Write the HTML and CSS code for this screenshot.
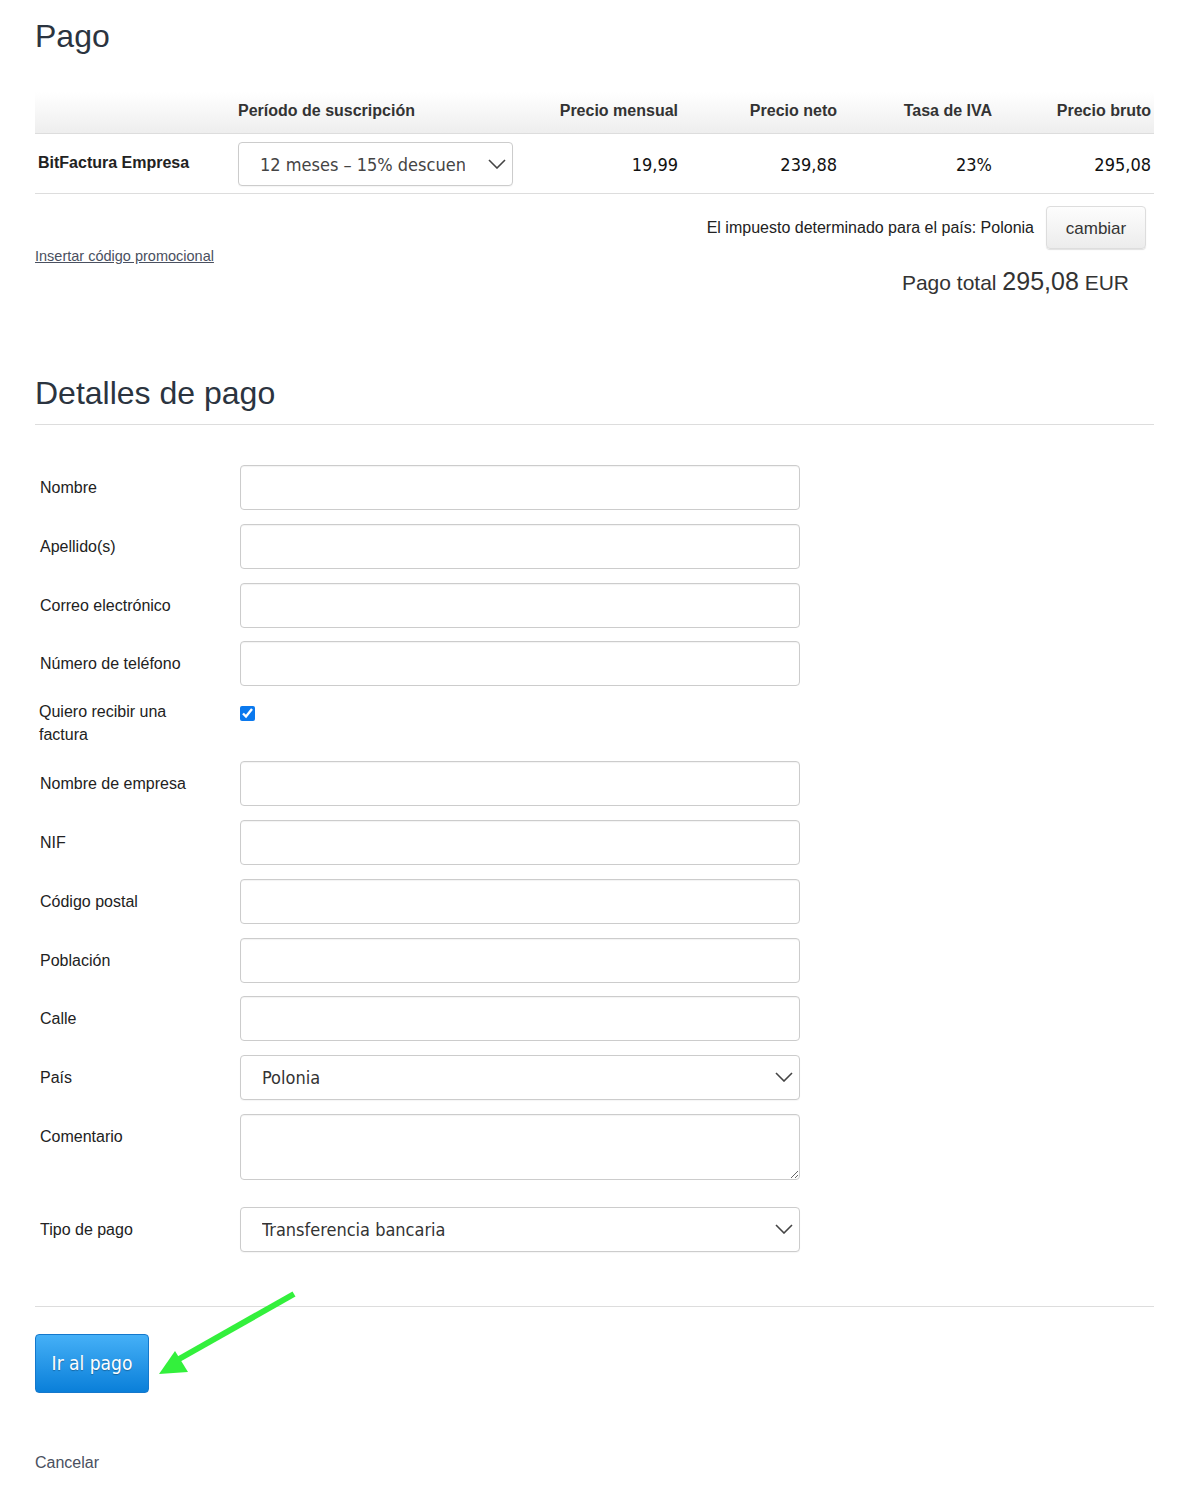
FILE: index.html
```html
<!DOCTYPE html>
<html lang="es">
<head>
    <meta charset="UTF-8">
    <meta name="viewport" content="width=device-width, initial-scale=1.0">
    <title>Pago - BitFactura</title>
    <link rel="stylesheet" href="styles.css">
</head>
<body>
    <div class="page">
        <h1>Pago</h1>

        <table class="plan-table">
            <thead>
                <tr>
                    <th class="col-name"></th>
                    <th class="col-period">Período de suscripción</th>
                    <th class="num col-month">Precio mensual</th>
                    <th class="num col-net">Precio neto</th>
                    <th class="num col-vat">Tasa de IVA</th>
                    <th class="num col-gross">Precio bruto</th>
                </tr>
            </thead>
            <tbody>
                <tr>
                    <td class="plan-name">BitFactura Empresa</td>
                    <td>
                        <div class="select-wrap period-select">
                            <select>
                                <option>12 meses – 15% descuento</option>
                                <option>1 mes</option>
                            </select>
                            <svg class="chevron" width="18" height="10" viewBox="0 0 18 10"><path d="M1 1 L9 9 L17 1" fill="none" stroke="#444" stroke-width="1.6"/></svg>
                        </div>
                    </td>
                    <td class="num amount">19,99</td>
                    <td class="num amount">239,88</td>
                    <td class="num amount">23%</td>
                    <td class="num amount">295,08</td>
                </tr>
            </tbody>
        </table>

        <div class="summary">
            <a href="#" class="promo-link">Insertar código promocional</a>
            <div class="summary-right">
                <div class="tax-line">
                    <span>El impuesto determinado para el país: Polonia</span>
                    <button class="btn-light">cambiar</button>
                </div>
                <div class="total">Pago total <span class="total-amount">295,08</span> EUR</div>
            </div>
        </div>

        <h2>Detalles de pago</h2>

        <form class="payment-form" onsubmit="return false">
            <div class="field">
                <label>Nombre</label>
                <input type="text">
            </div>
            <div class="field">
                <label>Apellido(s)</label>
                <input type="text">
            </div>
            <div class="field">
                <label>Correo electrónico</label>
                <input type="text">
            </div>
            <div class="field">
                <label>Número de teléfono</label>
                <input type="text">
            </div>
            <div class="field field-check">
                <label>Quiero recibir una factura</label>
                <input type="checkbox" checked>
            </div>
            <div class="field">
                <label>Nombre de empresa</label>
                <input type="text">
            </div>
            <div class="field">
                <label>NIF</label>
                <input type="text">
            </div>
            <div class="field">
                <label>Código postal</label>
                <input type="text">
            </div>
            <div class="field">
                <label>Población</label>
                <input type="text">
            </div>
            <div class="field">
                <label>Calle</label>
                <input type="text">
            </div>
            <div class="field">
                <label>País</label>
                <div class="select-wrap form-select">
                    <select>
                        <option>Polonia</option>
                        <option>España</option>
                    </select>
                    <svg class="chevron" width="18" height="10" viewBox="0 0 18 10"><path d="M1 1 L9 9 L17 1" fill="none" stroke="#444" stroke-width="1.6"/></svg>
                </div>
            </div>
            <div class="field field-area">
                <label>Comentario</label>
                <textarea></textarea>
            </div>
            <div class="field">
                <label>Tipo de pago</label>
                <div class="select-wrap form-select">
                    <select>
                        <option>Transferencia bancaria</option>
                        <option>Tarjeta</option>
                    </select>
                    <svg class="chevron" width="18" height="10" viewBox="0 0 18 10"><path d="M1 1 L9 9 L17 1" fill="none" stroke="#444" stroke-width="1.6"/></svg>
                </div>
            </div>

            <div class="actions">
                <button class="btn-primary" type="submit">Ir al pago</button>
                <svg class="arrow" width="160" height="110" viewBox="0 0 160 110">
                    <line x1="154" y1="13" x2="32" y2="82" stroke="#33f03c" stroke-width="6"/>
                    <polygon points="19,93 35,70 48,91" fill="#33f03c"/>
                </svg>
            </div>
            <a href="#" class="cancel-link">Cancelar</a>
        </form>
    </div>
</body>
</html>
```

FILE: styles.css
```css
body {
    margin: 0;
    font-family: "Liberation Sans", Arial, sans-serif;
    color: #222;
    background: #fff;
}
.page {
    width: 1119px;
    padding: 0 35px;
    position: relative;
}
h1, h2 {
    font-size: 32px;
    font-weight: normal;
    line-height: 35px;
    color: #2b3440;
    margin: 0;
}
h1 {
    padding-top: 19px;
    margin-bottom: 38px;
}
h2 {
    margin-top: 78px;
    padding-bottom: 13px;
    border-bottom: 1px solid #ddd;
}

/* tabla del plan */
.plan-table {
    width: 1119px;
    border-collapse: collapse;
    table-layout: fixed;
}
.plan-table th {
    height: 38px;
    padding: 0 3px 3px;
    font-size: 16px;
    font-weight: bold;
    color: #333;
    text-align: left;
    background: linear-gradient(#fff, #eee);
    border-bottom: 1px solid #ddd;
}
.plan-table td {
    padding: 8px 3px 7px;
    border-bottom: 1px solid #ddd;
}
.plan-table .num {
    text-align: right;
}
.col-name { width: 194px; }
.col-period { width: 299px; }
.col-month { width: 135px; }
.col-net { width: 153px; }
.col-vat { width: 149px; }
.col-gross { width: 153px; }
.plan-name {
    font-size: 16px;
    font-weight: bold;
    color: #222;
    padding-bottom: 9px !important;
}
.amount {
    font-family: "DejaVu Sans Condensed", "DejaVu Sans", sans-serif;
    font-stretch: condensed;
    font-size: 18px;
    color: #111;
    padding-top: 8px !important;
}

.select-wrap {
    position: relative;
}
.select-wrap select {
    appearance: none;
    -webkit-appearance: none;
    display: block;
    box-sizing: border-box;
    height: 44px;
    padding: 0 47px 0 21px;
    border: 1px solid #ccc;
    border-radius: 4px;
    background: #fff;
    font-family: "DejaVu Sans Condensed", "DejaVu Sans", sans-serif;
    font-stretch: condensed;
    font-size: 18px;
    color: #444;
    box-shadow: 0 1px 1px rgba(0, 0, 0, 0.04);
}
.select-wrap .chevron {
    position: absolute;
    right: 7px;
    top: 17px;
    pointer-events: none;
}
.period-select {
    width: 275px;
}
.period-select select {
    width: 275px;
}
.form-select select {
    width: 560px;
    height: 45px;
    color: #333;
}

/* resumen */
.summary {
    display: flex;
    justify-content: space-between;
    align-items: flex-start;
    padding-top: 12px;
}
.promo-link {
    margin-top: 42px;
    font-size: 14.5px;
    color: #4a5060;
}
.summary-right {
    display: flex;
    flex-direction: column;
    align-items: flex-end;
}
.tax-line {
    display: flex;
    align-items: center;
    gap: 12px;
    font-size: 16px;
    color: #222;
    margin-right: 8px;
}
.btn-light {
    width: 100px;
    height: 43px;
    font-family: "Liberation Sans", Arial, sans-serif;
    font-size: 17px;
    color: #333;
    background: linear-gradient(#fdfdfd, #ececec);
    border: 1px solid #ddd;
    border-radius: 4px;
    box-shadow: 0 1px 1px rgba(0, 0, 0, 0.12);
    padding: 3px 0 0;
}
.total {
    margin-top: 17px;
    margin-right: 25px;
    font-size: 21px;
    color: #333;
    line-height: 30px;
}
.total-amount {
    font-size: 25px;
}

/* formulario */
.payment-form {
    padding-top: 40px;
}
.field {
    display: flex;
    align-items: center;
    margin-bottom: 13.8px;
}
.field label {
    box-sizing: border-box;
    width: 205px;
    padding: 0 25px 0 5px;
    font-size: 16px;
    line-height: 23px;
    color: #222;
}
.field input[type="text"], .field textarea {
    box-sizing: border-box;
    width: 560px;
    height: 45px;
    margin: 0;
    border: 1px solid #ccc;
    border-radius: 4px;
    box-shadow: inset 0 1px 1px rgba(0, 0, 0, 0.05);
    font-size: 16px;
}
.field-check {
    align-items: flex-start;
    margin-bottom: 15px;
}
.field-check label {
    padding-left: 4px;
}
.field-check input {
    width: 15px;
    height: 15px;
    margin: 6px 0 0;
    accent-color: #0b79ee;
}
.field-area {
    align-items: flex-start;
    margin-bottom: 27px;
}
.field-area label {
    padding-top: 11px;
}
.field-area textarea {
    height: 66px;
    display: block;
}
.actions {
    position: relative;
    margin-top: 54px;
    padding-top: 27px;
    border-top: 1px solid #ddd;
}
.btn-primary {
    width: 114px;
    height: 59px;
    font-family: "DejaVu Sans Condensed", "DejaVu Sans", sans-serif;
    font-stretch: condensed;
    font-size: 19px;
    color: #fff;
    text-shadow: 0 1px 1px rgba(0, 0, 0, 0.3);
    background: linear-gradient(#45b0f7, #0a7fd9);
    border: 1px solid #1478cc;
    border-radius: 4px;
    padding: 0;
}
.arrow {
    position: absolute;
    left: 105px;
    top: -26px;
    pointer-events: none;
}
.cancel-link {
    display: block;
    margin-top: 61px;
    font-size: 16px;
    color: #4a5060;
    text-decoration: none;
}
```
